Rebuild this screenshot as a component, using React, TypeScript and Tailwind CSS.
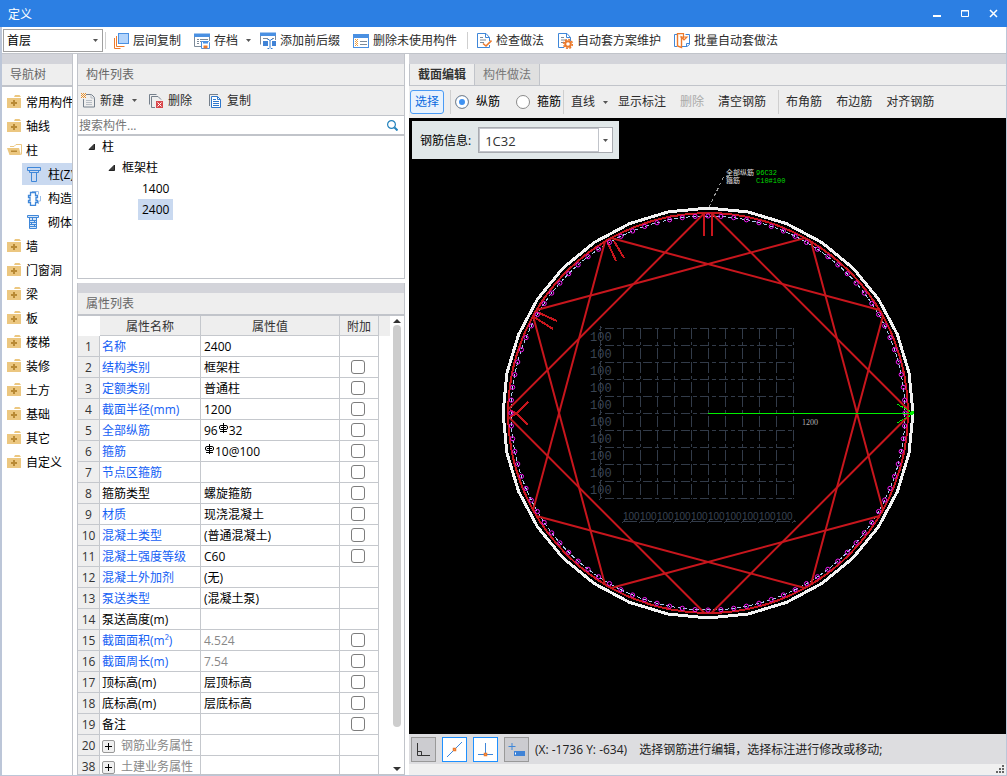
import { useState } from 'react';
import type { ReactNode } from 'react';
import clsx from 'clsx';

/* ---------- Icons ---------- */

const Caret = () => (
  <svg aria-hidden="true" width="5" height="3" viewBox="0 0 5 3" className="shrink-0">
    <path d="M0 0h5L2.5 3z" fill="#555" />
  </svg>
);

const CopyLayerIcon = () => (
  <svg aria-hidden="true" width="15" height="16" viewBox="0 0 15 16" fill="none">
    <path d="M.5 5v10.500h6" stroke="#ec7a2c" />
    <path d="M2.500 3v10.500h8" stroke="#ec7a2c" />
    <rect x="4.500" y=".5" width="10" height="10" fill="#b3d4fb" stroke="#4a90e2" />
  </svg>
);

const ArchiveIcon = () => (
  <svg aria-hidden="true" width="16" height="16" viewBox="0 0 16 16" fill="none">
    <path d="M.5 1v12.500H7M15.500 4v4" stroke="#7c8a99" />
    <path d="M0 .5h16V4H0z" fill="#4a90e2" />
    <path d="M3 6.500h2m1 0h8M3 8.500h2m1 0h2M3 10.500h2" stroke="#7c8a99" />
    <path d="M7.500 8.500h7l1 1v6h-8z" fill="#fff" stroke="#4a90e2" />
    <path d="M9 8.500h5v2H9z" fill="#4a90e2" />
    <path d="M9.500 12.500h4v3h-4z" fill="#ec7a2c" />
  </svg>
);

const AffixIcon = () => (
  <svg aria-hidden="true" width="16" height="17" viewBox="0 0 16 17" fill="none">
    <path d="M.5 1v11.500M15.500 4v4" stroke="#7c8a99" />
    <path d="M0 .5h16V4H0z" fill="#4a90e2" />
    <path d="M3 6.500h5m4 0h2" stroke="#7c8a99" />
    <path d="M3 9h5v5H3zM12 9h4v5h-4z" fill="#4083d6" />
    <path d="M7.500 7.500h1.500l1 1 1-1h1.500M10 8v7M7.500 16.500H9l1-1 1 1h1.500" stroke="#2f78cc" />
  </svg>
);

const UnusedIcon = () => (
  <svg aria-hidden="true" width="16" height="14" viewBox="0 0 16 14" fill="none">
    <rect x=".5" y=".5" width="15" height="13" fill="#fff" stroke="#4a90e2" />
    <path d="M0 0h16v4H0z" fill="#4a90e2" />
    <path d="M2.500 5v8M4.500 5v8" stroke="#f0a040" strokeDasharray="1 1" />
    <path d="M3.500 6v6" stroke="#f0a040" strokeDasharray="1 1" />
    <path d="M7 7.500h7M7 10.500h7" stroke="#7c8a99" />
  </svg>
);

const SheetPath = () => (
  <>
    <path d="M12.500 8V4.500L9 .5H.5v14H6" fill="#fff" stroke="#3f87d9" />
    <path d="M8.500.5v4h4" stroke="#3f87d9" />
    <path d="M3 4.500h3M3 7h6M3 9.500h4" stroke="#7c8a99" />
  </>
);

const CheckRuleIcon = () => (
  <svg aria-hidden="true" width="15" height="16" viewBox="0 0 15 16" fill="none">
    <SheetPath />
    <path d="M.5 14.500h12V12" stroke="#3f87d9" />
    <path d="M6 10.500l3 2.500 5.500-5.500" stroke="#ec7a2c" strokeWidth="1.600" />
  </svg>
);

const SchemeIcon = () => (
  <svg aria-hidden="true" width="15" height="16" viewBox="0 0 15 16" fill="none">
    <SheetPath />
    <circle cx="10" cy="11" r="4.400" stroke="#ec7a2c" strokeWidth="1.500" strokeDasharray="2 1.400" />
    <circle cx="10" cy="11" r="2.800" fill="#fff" stroke="#ec7a2c" strokeWidth="2" />
  </svg>
);

const BatchIcon = () => (
  <svg aria-hidden="true" width="16" height="16" viewBox="0 0 16 16" fill="none">
    <path d="M3 1.500H.5v12H3M11.500 1.500h4v10l-2.500 2H7" stroke="#3f87d9" />
    <path d="M12.500 13.500v-3h3" stroke="#3f87d9" />
    <path d="M3.500.5h4v14l-4-1.500z" fill="#fff" stroke="#ec7a2c" strokeWidth="1.400" />
    <path d="M5 .7h4.500V5.500M7 4l3 3 3-3z" fill="#fff" stroke="#ec7a2c" strokeWidth="1.200" />
  </svg>
);

const NewIcon = () => (
  <svg aria-hidden="true" width="14" height="15" viewBox="0 0 14 15" fill="none">
    <path d="M5 1.500h5.500l3 3v9.500h-11V6" stroke="#75808c" />
    <path d="M10 1.500V5h3.500M5 7.500h6M5 9.500h6M5 11.500h6" stroke="#b7bdc4" />
    <path d="M0 .5h5M0 2.500h5M0 4.500h5" stroke="#e8902c" strokeDasharray="1 1" />
    <path d="M1 1.500h3M1 3.500h3" stroke="#e8902c" strokeDasharray="1 1" />
  </svg>
);

const DeleteIcon = () => (
  <svg aria-hidden="true" width="14" height="14" viewBox="0 0 14 14" fill="none">
    <path d="M.5 10.500V.5h7" stroke="#75808c" />
    <path d="M6 13.500H2.500v-11H9l3 3" stroke="#75808c" />
    <path d="M7 7h7v7H7z" fill="#d9474c" />
    <path d="M8.500 8.500l4 4m0-4l-4 4" stroke="#fff" />
  </svg>
);

const DuplicateIcon = () => (
  <svg aria-hidden="true" width="12" height="14" viewBox="0 0 12 14" fill="none">
    <path d="M.5 12V.5H9" stroke="#75808c" />
    <path d="M2.500 2.500h6l3 3v8h-9z" fill="#fff" stroke="#2f78cc" />
    <path d="M8.500 2.500v3h3M4 5.500h3M4 7.500h6M4 9.500h6M4 11.500h6" stroke="#2f78cc" />
  </svg>
);

const FolderIcon = () => (
  <svg aria-hidden="true" width="15" height="14" viewBox="0 0 15 14" className="shrink-0">
    <path d="M8 0h4.500L14 2H7z" fill="#ecc780" />
    <path d="M0 3h14v10H0z" fill="#ecc780" />
    <path d="M6 5h2v2h2v2H8v2H6V9H4V7h2z" fill="#b98a35" />
  </svg>
);

const FolderOpenIcon = () => (
  <svg aria-hidden="true" width="15" height="14" viewBox="0 0 15 14" className="shrink-0">
    <path d="M3 3.500h4l2-2h5.500v10" fill="none" stroke="#ecc780" />
    <path d="M0 5h12l2 7H2.500z" fill="#ecc780" />
    <path d="M4 7.500h6v1.500H4z" fill="#b98a35" />
  </svg>
);

const ColumnIcon = () => (
  <svg aria-hidden="true" width="14" height="15" viewBox="0 0 14 15" fill="none" className="shrink-0">
    <path d="M.5.5h13v3H.5zM2.500 3.500v2h9v-2M4.500 5.500v9h5v-9" stroke="#3f87d9" />
  </svg>
);

const TieColumnIcon = () => (
  <svg aria-hidden="true" width="14" height="15" viewBox="0 0 14 15" fill="none" className="shrink-0">
    <path d="M5 .5h6.500v3M13.500 5v5h-2v3" stroke="#9cbfe8" />
    <path
      d="M3.500 1.500h5v3h2v2h-1.500v3h1.500v2h-2v3h-5v-3h-2v-2h1.500v-3H1.500v-2h2z"
      stroke="#3f87d9"
      strokeWidth="1.300"
    />
  </svg>
);

const MasonryIcon = () => (
  <svg aria-hidden="true" width="12" height="14" viewBox="0 0 12 14" fill="none" className="shrink-0">
    <path d="M.5.5h11v2H.5zM2.500 2.500v11h7v-11" fill="#d7e6f8" stroke="#3f87d9" />
    <path d="M2.500 5.500h7M2.500 7.500h7M2.500 9.500h7M2.500 11.500h7M5.500 3v2.500M7.500 5.500v2M4.500 7.500v2M7.500 9.500v2" stroke="#3f87d9" />
  </svg>
);

const Expander = () => (
  <svg aria-hidden="true" width="7" height="7" viewBox="0 0 7 7" className="shrink-0">
    <path d="M6.500 1v5.500H1z" fill="#404040" stroke="#222" />
  </svg>
);

const RebarMark = () => (
  <svg
    role="img"
    aria-label="HRB400"
    width="11"
    height="12"
    viewBox="0 0 11 12"
    fill="none"
    stroke="#000"
    className="mb-1"
  >
    <rect x="1.500" y="2.500" width="8" height="4" rx="1.500" />
    <path d="M5.500 0v10M3 4.500h5M2 8.500h7" />
  </svg>
);

/* ---------- Data ---------- */

interface NavItem {
  label: string;
  open?: boolean;
  children?: { label: string; icon: ReactNode; active?: boolean }[];
}

const navItems: NavItem[] = [
  { label: '常用构件' },
  { label: '轴线' },
  {
    label: '柱',
    open: true,
    children: [
      { label: '柱(Z)', icon: <ColumnIcon />, active: true },
      { label: '构造', icon: <TieColumnIcon /> },
      { label: '砌体', icon: <MasonryIcon /> },
    ],
  },
  { label: '墙' },
  { label: '门窗洞' },
  { label: '梁' },
  { label: '板' },
  { label: '楼梯' },
  { label: '装修' },
  { label: '土方' },
  { label: '基础' },
  { label: '其它' },
  { label: '自定义' },
];

interface PropertyRow {
  no: number;
  name: string;
  value?: ReactNode;
  tone?: 'blue' | 'black' | 'group';
  muted?: boolean;
  check?: boolean;
}

const rows: PropertyRow[] = [
  { no: 1, name: '名称', value: '2400', tone: 'blue' },
  { no: 2, name: '结构类别', value: '框架柱', tone: 'blue', check: true },
  { no: 3, name: '定额类别', value: '普通柱', tone: 'blue', check: true },
  { no: 4, name: '截面半径(mm)', value: '1200', tone: 'blue', check: true },
  { no: 5, name: '全部纵筋', value: <>96<RebarMark />32</>, tone: 'blue', check: true },
  { no: 6, name: '箍筋', value: <><RebarMark />10@100</>, tone: 'blue', check: true },
  { no: 7, name: '节点区箍筋', tone: 'blue', check: true },
  { no: 8, name: '箍筋类型', value: '螺旋箍筋', check: true },
  { no: 9, name: '材质', value: '现浇混凝土', tone: 'blue', check: true },
  { no: 10, name: '混凝土类型', value: '(普通混凝土)', tone: 'blue', check: true },
  { no: 11, name: '混凝土强度等级', value: 'C60', tone: 'blue', check: true },
  { no: 12, name: '混凝土外加剂', value: '(无)', tone: 'blue' },
  { no: 13, name: '泵送类型', value: '(混凝土泵)', tone: 'blue' },
  { no: 14, name: '泵送高度(m)' },
  { no: 15, name: '截面面积(m²)', value: '4.524', tone: 'blue', muted: true, check: true },
  { no: 16, name: '截面周长(m)', value: '7.54', tone: 'blue', muted: true, check: true },
  { no: 17, name: '顶标高(m)', value: '层顶标高', check: true },
  { no: 18, name: '底标高(m)', value: '层底标高', check: true },
  { no: 19, name: '备注', check: true },
  { no: 20, name: '钢筋业务属性', tone: 'group' },
  { no: 38, name: '土建业务属性', tone: 'group' },
];

/* ---------- Section drawing ---------- */

// angle in degrees, counter-clockwise, y pointing down
const polar = (r: number, deg: number) => {
  const a = (deg * Math.PI) / 180;
  return [r * Math.cos(a), -r * Math.sin(a)] as const;
};

const outline = Array.from({ length: 32 }, (_, i) => polar(205, i * 11.25).join(',')).join(' ');
const bars = Array.from({ length: 96 }, (_, i) => polar(197, i * 3.75));
const stirrups = [0, 30, 60].flatMap((start) =>
  [0, 90, 180, 270].map((step) => {
    const [x1, y1] = polar(200, start + step + 1);
    const [x2, y2] = polar(200, start + step + 89);
    return `M${x1} ${y1}L${x2} ${y2}`;
  }),
);
const ticks = Array.from({ length: 11 }, (_, i) => -85 + i * 17);

function SectionDrawing() {
  return (
    <svg
      role="img"
      aria-label="截面"
      viewBox="-299 -295 597 616"
      className="block h-full w-full"
      fill="none"
      shapeRendering="crispEdges"
    >
      <g stroke="#323b49">
        {ticks.map((t) => (
          <path key={`v${t}`} d={`M${t + 0.5} -85V86`} strokeDasharray="11 3 3 3 11 3" />
        ))}
        {ticks.map((t) => (
          <path key={`h${t}`} d={`M-103 ${t + 0.5}H86`} strokeDasharray="9 3 4 3" />
        ))}
        <path d="M-107.500 -87V86" strokeDasharray="5 2" />
        <path d="M-85 108.500H88" strokeDasharray="14 3" />
        {ticks.map((t) => (
          <path key={`d${t}`} d={`M-109 ${t + 2}l3 -3M${t - 1} 110l3 -3`} />
        ))}
      </g>
      <g fill="#3a4453">
        <g fontSize="12" className="[font-family:'Liberation_Mono',monospace]">
          {ticks.slice(0, 10).map((t) => (
            <text key={t} x="-118" y={t + 13}>
              100
            </text>
          ))}
        </g>
        <g fontSize="10" className="[font-family:'Liberation_Sans',sans-serif]">
          {ticks.slice(0, 10).map((t) => (
            <text key={t} x={t} y="107">
              100
            </text>
          ))}
        </g>
      </g>

      <polygon points={outline} stroke="#f2f2f2" strokeWidth="3" />
      <circle r="197" stroke="#a9cdee" strokeDasharray="4 2" />
      <g stroke="#c8161d" strokeWidth="2">
        <circle r="200" />
        <g shapeRendering="geometricPrecision">
          {stirrups.map((d) => (
            <path key={d} d={d} />
          ))}
        </g>
        <path d="M-4 -200v23M4 -200v23" />
        <path d="M-101 -172l9 20M-94 -172l10 17" />
        <path d="M-171 -101l20 9M-174 -96l19 12" />
        <path d="M-198 -3l7 4 11 11M-198 4l7 -4 11 -11" />
      </g>
      <g stroke="#f018f0" shapeRendering="geometricPrecision">
        {bars.map(([x, y]) => (
          <circle key={`${x},${y}`} cx={x} cy={y} r="2.100" />
        ))}
      </g>

      <path d="M0 .5h205" stroke="#00f000" />
      <path d="M189 -9l17 9.500 -17 9.500" stroke="#00f000" strokeDasharray="3 1" />
      <circle cx="204" cy="0" r="2" fill="#00f000" />
      <text
        x="94"
        y="12"
        fontSize="8"
        fill="#b4b4b4"
        className="[font-family:'Liberation_Serif',serif]"
      >
        1200
      </text>

      <path d="M1 -206L16 -237h8" stroke="#9a9a9a" strokeDasharray="3 3" />
      <g fontSize="7" className="[font-family:'Liberation_Mono','Noto_Sans_CJK_SC',monospace]">
        <text x="18" y="-238" fill="#e0e0e0">
          全部纵筋
        </text>
        <text x="48" y="-238" fill="#00d800">
          96C32
        </text>
        <text x="18" y="-230" fill="#e0e0e0">
          箍筋
        </text>
        <text x="48" y="-230" fill="#00d800">
          C10#100
        </text>
      </g>
    </svg>
  );
}

/* ---------- Shared pieces ---------- */

function ToolButton({ icon, label, caret }: { icon?: ReactNode; label: string; caret?: boolean }) {
  return (
    <button type="button" className="flex shrink-0 items-center gap-1 whitespace-nowrap text-[#2b2b2b]">
      {icon && <span className="flex w-4 justify-center">{icon}</span>}
      {label}
      {caret && (
        <span className="-mr-1 pl-1">
          <Caret />
        </span>
      )}
    </button>
  );
}

const Divider = ({ className }: { className?: string }) => (
  <span className={clsx('w-px shrink-0 bg-[#cfcfcf]', className)} />
);

const Strip = () => <div className="h-[10px] shrink-0 bg-[#d3d4da]" />;

/* ---------- Panels ---------- */

function NavTree() {
  return (
    <aside className="flex w-[71px] shrink-0 flex-col overflow-hidden border-r border-[#c1c4ca]">
      <Strip />
      <h2 className="flex h-[23px] shrink-0 items-center border-b-2 border-[#c1c4ca] bg-[#eee] pl-2 text-[#666]">
        导航树
      </h2>
      <ul className="pt-[3px] whitespace-nowrap text-black">
        {navItems.map((item) => (
          <li key={item.label}>
            <button type="button" className="flex h-6 items-center gap-1 pl-[5px]">
              {item.open ? <FolderOpenIcon /> : <FolderIcon />}
              <span className="pt-0.5">{item.label}</span>
            </button>
            {item.children && (
              <ul>
                {item.children.map((child) => (
                  <li key={child.label} className="flex h-6 items-center pl-5">
                    <button
                      type="button"
                      className={clsx(
                        'flex h-[22px] flex-1 items-center gap-1 pl-[5px]',
                        child.active && 'bg-[#c9d9f0]',
                      )}
                    >
                      <span className="flex w-[17px] shrink-0">{child.icon}</span>
                      <span className="pt-0.5">{child.label}</span>
                    </button>
                  </li>
                ))}
              </ul>
            )}
          </li>
        ))}
      </ul>
    </aside>
  );
}

function ComponentList() {
  return (
    <section className="flex shrink-0 flex-col border-x border-b border-[#c1c4ca]">
      <Strip />
      <h2 className="flex h-[22px] items-center border-b border-[#c1c4ca] bg-[#eee] pl-2 text-[#666]">
        构件列表
      </h2>
      <div className="flex h-[30px] items-center gap-[15px] border-b border-[#c1c4ca] bg-[#eee] pl-0.5">
        <ToolButton icon={<NewIcon />} label="新建" caret />
        <ToolButton icon={<DeleteIcon />} label="删除" />
        <ToolButton icon={<DuplicateIcon />} label="复制" />
      </div>
      <div className="flex h-5 items-center border-b-2 border-[#c1c4ca] pr-1.5">
        <input
          aria-label="搜索构件"
          placeholder="搜索构件..."
          className="min-w-0 flex-1 pt-0.5 pl-px leading-4 outline-none placeholder:text-[#757575]"
        />
        <svg aria-hidden="true" width="11" height="11" viewBox="0 0 11 11" fill="none" stroke="#2583bd">
          <circle cx="4.500" cy="4.500" r="3.900" strokeWidth="1.200" />
          <path d="M7.500 7.500l3 3" strokeWidth="2" />
        </svg>
      </div>
      <ul className="h-[142px] leading-[21px] text-black">
        <li>
          <div className="flex items-center gap-[7px] pl-[10px]">
            <Expander />柱
          </div>
          <ul>
            <li>
              <div className="flex items-center gap-[7px] pl-[30px]">
                <Expander />
                框架柱
              </div>
              <ul className="pl-15">
                <li>
                  <button type="button" className="block px-1">
                    1400
                  </button>
                </li>
                <li>
                  <button type="button" className="block bg-[#c9d9f0] px-1">
                    2400
                  </button>
                </li>
              </ul>
            </li>
          </ul>
        </li>
      </ul>
    </section>
  );
}

const cell = 'border-r border-b border-[#c5c8cd]';

function PropertyList() {
  return (
    <section className="flex min-h-0 flex-1 flex-col border-x border-b border-[#c1c4ca]">
      <Strip />
      <h2 className="flex h-[23px] shrink-0 items-center border-b-2 border-[#c1c4ca] bg-[#eee] pl-2 text-[#666]">
        属性列表
      </h2>
      <div className="flex min-h-0 flex-1">
        <div className="min-w-0 flex-1 overflow-hidden">
          <table className="w-full table-fixed border-separate border-spacing-0 text-left whitespace-nowrap">
            <colgroup>
              <col className="w-[22px]" />
              <col className="w-[101px]" />
              <col className="w-[139px]" />
              <col className="w-[39px]" />
              <col />
            </colgroup>
            <thead className="text-center leading-[17px] text-[#333]">
              <tr>
                <td className="h-5" />
                <th className={clsx(cell, 'bg-[#eee] pt-0.5 font-normal')}>属性名称</th>
                <th className={clsx(cell, 'bg-[#eee] pt-0.5 font-normal')}>属性值</th>
                <th className={clsx(cell, 'bg-[#eee] pt-0.5 font-normal')}>附加</th>
                <td className="bg-[#eee]" />
              </tr>
            </thead>
            <tbody className="leading-[18px] text-black">
              {rows.map((row) => (
                <tr key={row.no}>
                  <th className={clsx(cell, 'h-[21px] bg-[#eee] pt-0.5 text-center font-normal text-[#333]')}>
                    {row.no}
                  </th>
                  <td
                    className={clsx(
                      cell,
                      'pt-0.5 pl-0.5',
                      row.tone === 'blue' && 'text-[#1460f5]',
                      row.tone === 'group' && 'text-[#888]',
                    )}
                  >
                    {row.tone === 'group' ? (
                      <span className="flex items-center gap-1.5">
                        <button
                          type="button"
                          aria-label={`展开${row.name}`}
                          className="flex h-[13px] w-[13px] items-center justify-center rounded-xs border border-[#999] bg-[#f0f0f0]"
                        >
                          <svg width="7" height="7" viewBox="0 0 7 7" stroke="#000">
                            <path d="M3.500 0v7M0 3.500h7" />
                          </svg>
                        </button>
                        {row.name}
                      </span>
                    ) : (
                      row.name
                    )}
                  </td>
                  <td className={clsx(cell, 'pt-0.5 pl-[3px]', row.muted && 'text-[#888]')}>
                    <span className="flex items-center">{row.value}</span>
                  </td>
                  <td className={cell}>
                    {row.check && (
                      <input
                        type="checkbox"
                        aria-label={`附加${row.name}`}
                        className="ml-[11px] block h-[14px] w-[14px] appearance-none rounded-[3px] border border-[#7d7d7d] bg-white checked:bg-[#4a9bf5]"
                      />
                    )}
                  </td>
                  <td />
                </tr>
              ))}
            </tbody>
          </table>
        </div>
        <div aria-hidden="true" className="flex w-[14px] shrink-0 flex-col items-center py-0.5">
          <svg width="8" height="5" viewBox="0 0 8 5">
            <path d="M0 5l4-4 4 4z" fill="#333" />
          </svg>
          <div className="mt-0.5 mb-10 w-2 flex-1 rounded-full bg-[#cdcdcd]" />
          <svg width="8" height="5" viewBox="0 0 8 5">
            <path d="M0 0l4 4 4-4z" fill="#333" />
          </svg>
        </div>
      </div>
    </section>
  );
}

const radioClass =
  'h-[14px] w-[14px] shrink-0 appearance-none rounded-full border border-[#8a8a8a] bg-white checked:bg-[#3f92f2] checked:shadow-[inset_0_0_0_3px_white]';

function SectionEditor() {
  const [mode, setMode] = useState('main');
  const [rebar, setRebar] = useState('1C32');

  return (
    <main className="flex min-w-0 flex-1 flex-col">
      <Strip />
      <div role="tablist" className="flex h-[22px] shrink-0 border-b border-l border-[#c1c4ca] bg-[#eee]">
        <button
          type="button"
          role="tab"
          aria-selected="true"
          className="border-r border-[#c1c4ca] px-2 font-bold text-[#333]"
        >
          截面编辑
        </button>
        <button
          type="button"
          role="tab"
          aria-selected="false"
          className="border-r border-[#c1c4ca] bg-[#e0e0e0] px-2 text-[#777]"
        >
          构件做法
        </button>
      </div>
      <div className="flex h-8 shrink-0 items-center overflow-hidden bg-[#eee] pl-px whitespace-nowrap text-[#2b2b2b]">
        <button
          type="button"
          className="h-6 rounded-[3px] border border-[#4a9bf5] bg-[#e8f2fd] px-1 text-[#0a6be0]"
        >
          选择
        </button>
        <Divider className="mr-1 ml-1.5 h-6" />
        <label className="flex items-center gap-[7px] text-black">
          <input
            type="radio"
            name="mode"
            checked={mode === 'main'}
            onChange={() => setMode('main')}
            className={radioClass}
          />
          纵筋
        </label>
        <label className="ml-4 flex items-center gap-[7px] text-black">
          <input
            type="radio"
            name="mode"
            checked={mode === 'stirrup'}
            onChange={() => setMode('stirrup')}
            className={radioClass}
          />
          箍筋
        </label>
        <Divider className="mr-[7px] ml-0.5 h-6" />
        <div className="flex items-center gap-[14px]">
          <ToolButton label="直线" caret />
          <button type="button">显示标注</button>
          <button type="button" disabled className="text-[#aaa]">
            删除
          </button>
          <button type="button">清空钢筋</button>
        </div>
        <Divider className="mr-[7px] ml-3 h-6" />
        <div className="flex items-center gap-[14px]">
          <button type="button">布角筋</button>
          <button type="button">布边筋</button>
          <button type="button">对齐钢筋</button>
        </div>
      </div>

      <div className="relative min-h-0 flex-1 overflow-hidden bg-black">
        <SectionDrawing />
        <div className="absolute top-[3px] left-[3px] flex h-[38px] items-center gap-[7px] bg-[#e1e8e9] pr-1.5 pl-2 text-black">
          <label htmlFor="rebar-info" className="pt-0.5">
            钢筋信息:
          </label>
          <div className="flex h-[26px] w-[135px] border border-[#a8abb0] bg-white">
            <input
              id="rebar-info"
              value={rebar}
              onChange={(e) => setRebar(e.target.value)}
              className="min-w-0 flex-1 border border-[#c1c4ca] pt-0.5 pl-[5px] text-[13px] text-[#333] outline-none"
            />
            <button type="button" aria-label="展开" className="flex w-[13px] items-center justify-center">
              <Caret />
            </button>
          </div>
        </div>
      </div>

      <div className="flex h-[30px] shrink-0 items-center gap-1.5 bg-[#dddde0] pl-0.5 whitespace-nowrap text-[#222]">
        <button
          type="button"
          aria-label="正交"
          className="flex h-[25px] w-[25px] items-center justify-center border border-[#999] bg-[#ccccd0]"
        >
          <svg width="15" height="15" viewBox="0 0 15 15" fill="none" stroke="#333">
            <path d="M1.500 1v12.500H14M1.500 9.500h4v4" />
          </svg>
        </button>
        <button
          type="button"
          aria-label="中点"
          className="flex h-[25px] w-[25px] items-center justify-center border border-[#1e90ff] bg-white"
        >
          <svg width="17" height="17" viewBox="0 0 17 17" fill="none">
            <path d="M1 16L16 1" stroke="#3f87d9" />
            <path d="M7.500 7.500h2v2h-2z" fill="#fff" stroke="#ec7a2c" strokeWidth="1.500" />
          </svg>
        </button>
        <button
          type="button"
          aria-label="垂点"
          className="flex h-[25px] w-[25px] items-center justify-center border border-[#1e90ff] bg-white"
        >
          <svg width="15" height="15" viewBox="0 0 15 15" fill="none">
            <path d="M7.500 1v11M0 12.500h15" stroke="#3f87d9" />
            <path d="M6.500 11.500h2v2h-2z" fill="#fff" stroke="#ec7a2c" strokeWidth="1.500" />
          </svg>
        </button>
        <button
          type="button"
          aria-label="动态输入"
          className="flex h-[25px] w-[25px] items-center justify-center border border-[#999] bg-[#ccccd0]"
        >
          <svg width="17" height="15" viewBox="0 0 17 15" fill="none">
            <path d="M4 1v7M.5 4.500h7" stroke="#3f87d9" />
            <path d="M6 9h11v5H6z" fill="#4083d6" />
            <path d="M7.500 10.500v2" stroke="#fff" />
          </svg>
        </button>
        <p className="flex gap-3 pt-0.5">
          <span>(X: -1736 Y: -634)</span>
          <span>选择钢筋进行编辑，选择标注进行修改或移动;</span>
        </p>
      </div>
      <div className="flex h-[11px] shrink-0 items-end justify-end bg-[#f0f0f0] pr-0.5 pb-0.5">
        <svg aria-hidden="true" width="8" height="8" viewBox="0 0 8 8" fill="#666">
          <path d="M6 0h2v2H6zM3 3h2v2H3zM6 3h2v2H6zM0 6h2v2H0zM3 6h2v2H3zM6 6h2v2H6z" />
        </svg>
      </div>
    </main>
  );
}

export default function App() {
  return (
    <div className="flex h-screen flex-col overflow-hidden bg-white text-[12px] leading-4 [font-family:'Open_Sans','Noto_Sans_CJK_SC',sans-serif]">
      <header className="flex h-[27px] shrink-0 items-center justify-between bg-[#2c7fe3] pr-[9px] pl-2 text-white">
        <h1 className="pt-0.5">定义</h1>
        <div className="flex items-center gap-[19px]">
          <button type="button" aria-label="最小化">
            <svg width="9" height="9" viewBox="0 0 9 9" fill="none" stroke="#fff" strokeWidth="2">
              <path d="M0 7h8" />
            </svg>
          </button>
          <button type="button" aria-label="最大化">
            <svg width="9" height="9" viewBox="0 0 9 9" fill="none" stroke="#fff">
              <path d="M.5 1.500h7v6h-7zM0 2h8" />
            </svg>
          </button>
          <button type="button" aria-label="关闭">
            <svg width="9" height="9" viewBox="0 0 9 9" fill="none" stroke="#fff" strokeWidth="1.500">
              <path d="M1 1l7 7M8 1L1 8" />
            </svg>
          </button>
        </div>
      </header>

      <div className="flex min-h-0 flex-1 flex-col border-r border-b border-l-2 border-[#bcc6d8]">
        <div className="flex h-[27px] shrink-0 items-center border-b border-[#c1c4ca] pt-px pl-px">
          <div className="relative flex h-[23px] w-[100px] shrink-0 items-center border border-[#a0a0a0]">
            <select aria-label="楼层" className="h-full w-full appearance-none pl-[3px] text-black outline-none">
              <option>首层</option>
            </select>
            <span className="pointer-events-none absolute right-1 flex">
              <Caret />
            </span>
          </div>
          <Divider className="mr-[7px] ml-0.5 h-[17px]" />
          <div className="flex items-center gap-[13px]">
            <ToolButton icon={<CopyLayerIcon />} label="层间复制" />
            <ToolButton icon={<ArchiveIcon />} label="存档" caret />
            <ToolButton icon={<AffixIcon />} label="添加前后缀" />
            <ToolButton icon={<UnusedIcon />} label="删除未使用构件" />
          </div>
          <Divider className="mr-2 ml-[10px] h-[17px]" />
          <div className="flex items-center gap-[13px]">
            <ToolButton icon={<CheckRuleIcon />} label="检查做法" />
            <ToolButton icon={<SchemeIcon />} label="自动套方案维护" />
            <ToolButton icon={<BatchIcon />} label="批量自动套做法" />
          </div>
        </div>

        <div className="flex min-h-0 flex-1 gap-1">
          <NavTree />
          <div className="flex w-[328px] shrink-0 flex-col gap-1">
            <ComponentList />
            <PropertyList />
          </div>
          <SectionEditor />
        </div>
      </div>
    </div>
  );
}
